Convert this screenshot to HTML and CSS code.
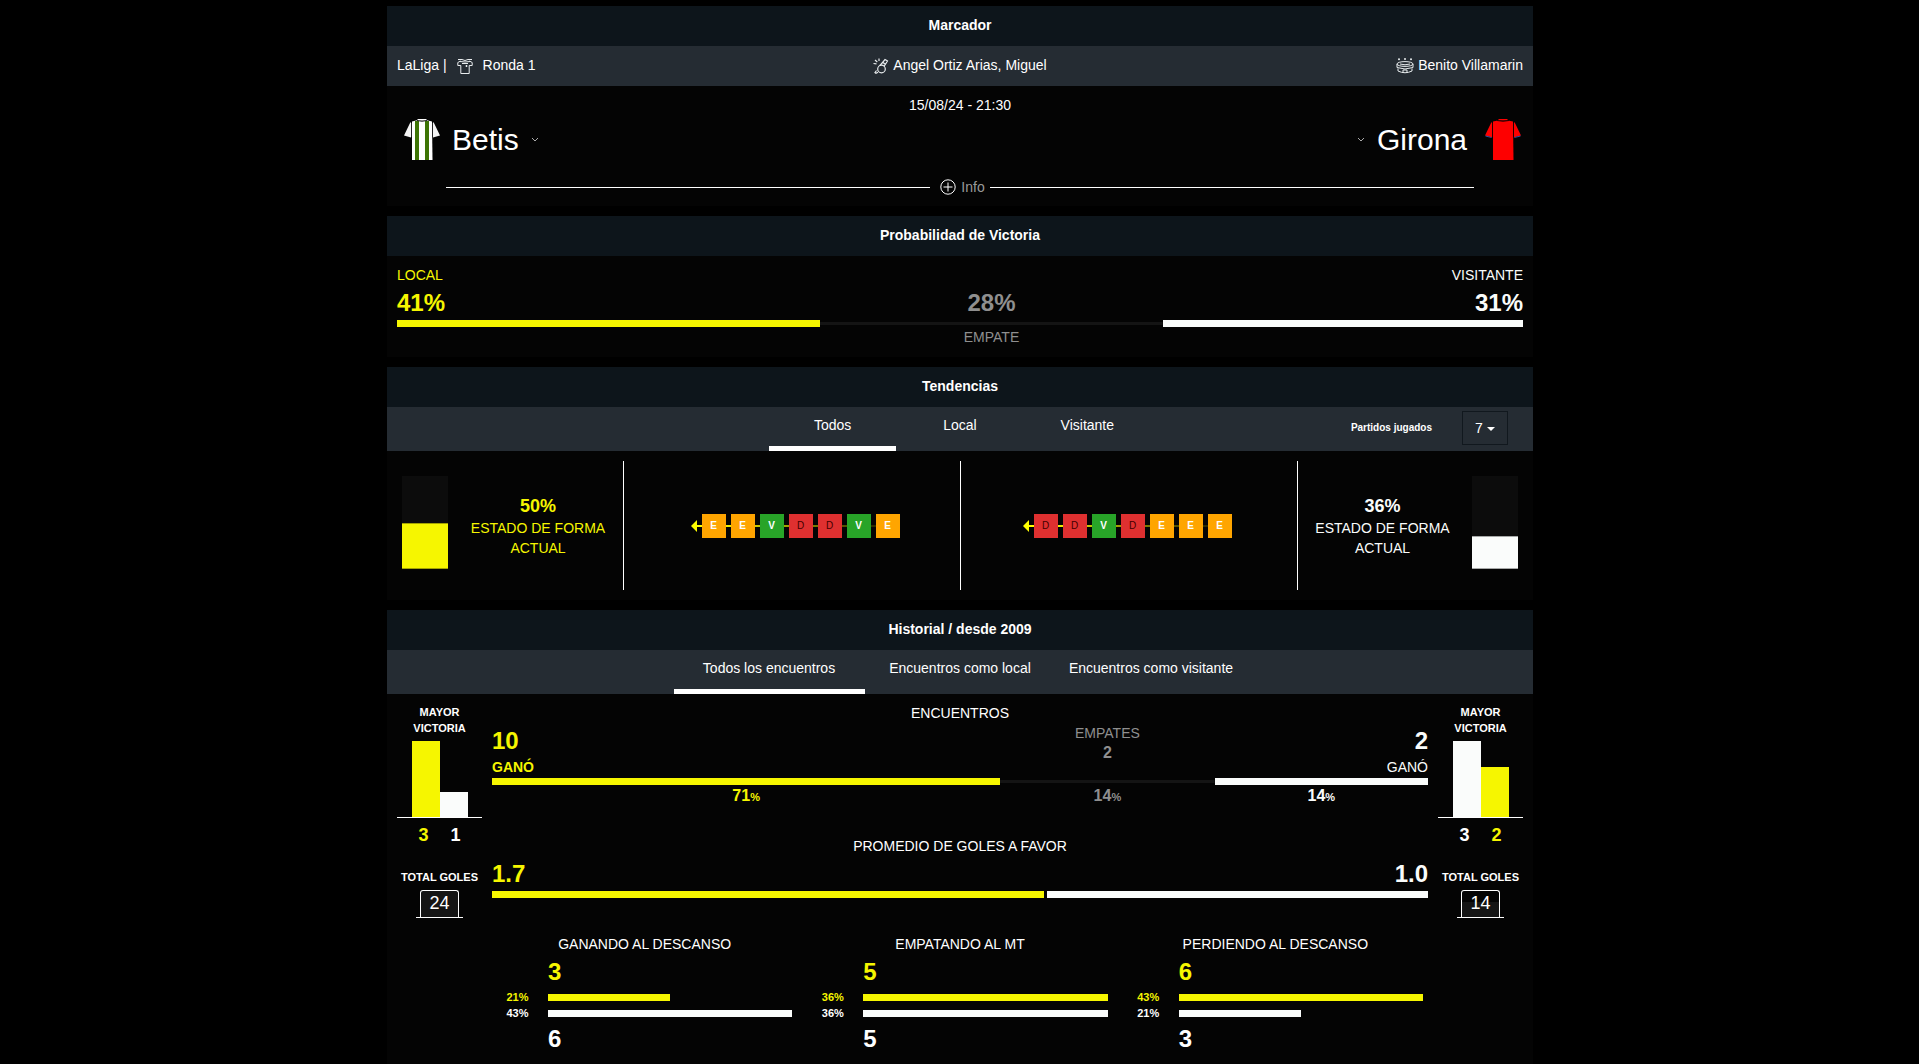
FILE: index.html
```html
<!DOCTYPE html>
<html lang="es">
<head>
<meta charset="utf-8">
<meta name="viewport" content="width=device-width, initial-scale=1">
<title>Betis - Girona</title>
<link rel="stylesheet" href="styles.css">
</head>
<body>
<main class="page">

<section class="panel">
  <h2 class="panel-title">Marcador</h2>
  <div class="match-meta">
    <div class="meta-item meta-league"><span>LaLiga |</span>
      <svg class="meta-icon" width="16" height="16" viewBox="0 0 16 16" aria-hidden="true"><g fill="none" stroke="#e8ecee"><path d="M1 1.500h4l3 1 3-1h4M3 3.500l5 .5 5-.5M3.500 3L.8 4.500v3h3v8h8.400v-8h3v-3L12.500 3"/><path d="M5 5.500h6M8.500 8h2M9.500 7v2"/></g></svg>
      <span>Ronda 1</span></div>
    <div class="meta-item meta-center">
      <svg class="meta-icon" width="16" height="16" viewBox="0 0 16 16" aria-hidden="true"><g fill="none" stroke="#e8ecee" stroke-width="1.200"><circle cx="8.500" cy="11" r="3.800"/><path d="M7 7.500L12 1.500l2.500 1.500-3.500 5.500M10 4.500l2.300 1.800M.5 5.500l3 .3M6 .5v2.500M2 2l2.300 2M3.500 12.500l-1.500 2 1 .7 2-1"/></g></svg>
      <span>Angel Ortiz Arias, Miguel</span></div>
    <div class="meta-item meta-right">
      <svg class="meta-icon" width="18" height="16" viewBox="0 0 18 16" aria-hidden="true"><g fill="none" stroke="#e8ecee"><ellipse cx="9" cy="6" rx="8" ry="2.400"/><path d="M4 6q5 1.600 10 0M1 6v3.500q8 3 16 0V6M2 10.500v2.500q7 3.500 14 0v-2.500M7 15v-3h4v3"/></g><g fill="#e8ecee"><circle cx="3" cy="1.300" r="1"/><circle cx="9" cy="1" r="1"/><circle cx="15" cy="1.300" r="1"/></g></svg>
      <span>Benito Villamarin</span></div>
  </div>
  <div class="score">
    <time class="score-date" datetime="2024-08-15T21:30">15/08/24 - 21:30</time>
    <div class="teams">
      <div class="team">
        <svg width="36" height="42" viewBox="0 0 36 42" aria-hidden="true"><path fill="#f4f4f4" d="M6.500 3L0 16.500l7 2L8 6zM29.500 3L36 16.500l-7 2L28 6z"/><path fill="#fff" d="M8 2.500L13 1.200h10l5 1.300.5 38.500H8z"/><path fill="#3d7405" d="M11 2h4v39h-4zM21 2h4v39h-4z"/><path fill="none" stroke="#222" d="M7.500 4v14M28.500 4v14M13 1.500q5 1.500 10 0"/><path stroke="#fff" d="M13.500.5h9"/></svg>
        <h1 class="team-name">Betis</h1>
        <svg width="8" height="6" viewBox="0 0 8 6" aria-hidden="true"><path fill="none" stroke="#aaa" d="M1 1l3 3 3-3"/></svg>
      </div>
      <div class="team">
        <svg width="8" height="6" viewBox="0 0 8 6" aria-hidden="true"><path fill="none" stroke="#aaa" d="M1 1l3 3 3-3"/></svg>
        <h1 class="team-name">Girona</h1>
        <svg class="kit-away" width="36" height="42" viewBox="0 0 36 42" aria-hidden="true"><path fill="#fe0000" d="M6.500 3L0 16.500l7 2L8 6zM29.500 3L36 16.500l-7 2L28 6z"/><path stroke="#2c4fa0" d="M.5 17l6 1.500M35.500 17l-6 1.500"/><path fill="#fe0000" d="M8 2.500L13 1.500h10l5 1L28.500 41H8z"/><path fill="none" stroke="#200" d="M7.500 4v14M28.500 4v14M12 1.500q6 1.500 12 0"/><path stroke="#fe0000" d="M13.500.5h9"/></svg>
      </div>
    </div>
    <div class="info-row">
      <button class="info-btn" type="button">
        <svg width="16" height="16" viewBox="0 0 16 16" aria-hidden="true"><g fill="none" stroke="#fff"><circle cx="8" cy="8" r="7.200"/><path d="M3.500 8h9M8 3.500v9"/></g></svg>
        Info</button>
    </div>
  </div>
</section>

<section class="panel">
  <h2 class="panel-title">Probabilidad de Victoria</h2>
  <div class="odds">
    <div class="odds-col home" style="width:37.6%"><span class="label">LOCAL</span><strong class="big">41%</strong><i class="bar"></i></div>
    <div class="odds-col draw" style="width:30.4%"><strong class="big">28%</strong><i class="bar bar-draw"></i><span class="label">EMPATE</span></div>
    <div class="odds-col away" style="width:32%"><span class="label">VISITANTE</span><strong class="big">31%</strong><i class="bar"></i></div>
  </div>
</section>

<section class="panel">
  <h2 class="panel-title">Tendencias</h2>
  <div class="tabbar">
    <nav class="tabs tabs-third">
      <button class="tab active" type="button">Todos</button>
      <button class="tab" type="button">Local</button>
      <button class="tab" type="button">Visitante</button>
    </nav>
    <div class="played">
      <label for="played">Partidos jugados</label>
      <span class="select"><select id="played"><option>5</option><option>6</option><option selected>7</option></select></span>
    </div>
  </div>
  <div class="trends">
    <div class="form-state home">
      <div class="gauge"><i class="gauge-fill" style="height:50%"></i></div>
      <p class="form-text"><strong>50%</strong>ESTADO DE FORMA ACTUAL</p>
    </div>
    <div class="streak streak-home"><ol class="streak-list">
      <li class="tie">E</li><li class="tie">E</li><li class="win">V</li><li class="loss">D</li><li class="loss">D</li><li class="win">V</li><li class="tie">E</li>
    </ol></div>
    <div class="streak streak-away"><ol class="streak-list">
      <li class="loss">D</li><li class="loss">D</li><li class="win">V</li><li class="loss">D</li><li class="tie">E</li><li class="tie">E</li><li class="tie">E</li>
    </ol></div>
    <div class="form-state away">
      <p class="form-text"><strong>36%</strong>ESTADO DE FORMA ACTUAL</p>
      <div class="gauge"><i class="gauge-fill" style="height:36%"></i></div>
    </div>
  </div>
</section>

<section class="panel panel-last">
  <h2 class="panel-title">Historial / desde 2009</h2>
  <div class="tabbar">
    <nav class="tabs tabs-half">
      <button class="tab active" type="button">Todos los encuentros</button>
      <button class="tab" type="button">Encuentros como local</button>
      <button class="tab" type="button">Encuentros como visitante</button>
    </nav>
  </div>
  <div class="history">
    <aside class="side">
      <h3 class="side-title">MAYOR VICTORIA</h3>
      <div class="columns"><i class="col-home" style="height:100%"></i><i class="col-away" style="height:33%"></i></div>
      <div class="columns-values"><b class="home">3</b><b>1</b></div>
      <h3 class="side-title">TOTAL GOLES</h3>
      <div class="goal"><span class="goal-box" style="--fill:100%">24</span></div>
    </aside>

    <div class="history-main">
      <h3 class="stat-title">ENCUENTROS</h3>
      <div class="split">
        <div class="split-col home" style="width:54.3%"><div class="split-head"><strong class="big">10</strong><b>GANÓ</b></div><i class="bar"></i><span class="pct">71<small>%</small></span></div>
        <div class="split-col draw" style="width:22.9%"><div class="split-head"><span>EMPATES</span><b class="mid">2</b></div><i class="bar bar-draw"></i><span class="pct">14<small>%</small></span></div>
        <div class="split-col away" style="width:22.8%"><div class="split-head"><strong class="big">2</strong><span>GANÓ</span></div><i class="bar"></i><span class="pct">14<small>%</small></span></div>
      </div>
      <h3 class="stat-title">PROMEDIO DE GOLES A FAVOR</h3>
      <div class="split split-goals">
        <div class="split-col home" style="width:59%"><strong class="big">1.7</strong><i class="bar"></i></div>
        <div class="split-col away" style="width:40.7%"><strong class="big">1.0</strong><i class="bar"></i></div>
      </div>
      <div class="halves">
        <div class="half">
          <h3 class="stat-title">GANANDO AL DESCANSO</h3>
          <strong class="big home">3</strong>
          <span class="half-pct home">21%</span><i class="bar home" style="width:50%"></i>
          <span class="half-pct">43%</span><i class="bar" style="width:100%"></i>
          <strong class="big">6</strong>
        </div>
        <div class="half">
          <h3 class="stat-title">EMPATANDO AL MT</h3>
          <strong class="big home">5</strong>
          <span class="half-pct home">36%</span><i class="bar home" style="width:100%"></i>
          <span class="half-pct">36%</span><i class="bar" style="width:100%"></i>
          <strong class="big">5</strong>
        </div>
        <div class="half">
          <h3 class="stat-title">PERDIENDO AL DESCANSO</h3>
          <strong class="big home">6</strong>
          <span class="half-pct home">43%</span><i class="bar home" style="width:100%"></i>
          <span class="half-pct">21%</span><i class="bar" style="width:50%"></i>
          <strong class="big">3</strong>
        </div>
      </div>
    </div>

    <aside class="side">
      <h3 class="side-title">MAYOR VICTORIA</h3>
      <div class="columns"><i class="col-away" style="height:100%"></i><i class="col-home" style="height:66%"></i></div>
      <div class="columns-values"><b>3</b><b class="home">2</b></div>
      <h3 class="side-title">TOTAL GOLES</h3>
      <div class="goal"><span class="goal-box" style="--fill:58%">14</span></div>
    </aside>
  </div>
</section>

</main>
</body>
</html>
```

FILE: styles.css
```css
:root {
  --home: #f6f600;
  --away: #fafcfb;
  --muted: #8f8f8f;
  --title-bg: #0d151b;
  --bar-bg: #252c33;
}

* { box-sizing: border-box; }

body {
  margin: 0;
  padding-left: 1px;
  background: #000;
  color: #fff;
  font: 14px/20px "Liberation Sans", Arial, sans-serif;
}

h1, h2, h3, p, ol { margin: 0; padding: 0; font-size: inherit; font-weight: normal; }
button, select { font: inherit; color: inherit; background: none; border: 0; padding: 0; }
i { display: block; }

.page {
  max-width: 1146px;
  min-height: 100vh;
  margin: 0 auto;
  padding-top: 6px;
  display: flex;
  flex-direction: column;
  gap: 10px;
}

.panel { background: #040404; }
.panel-last { flex: 1; }

.panel-title {
  padding: 9px 10px 11px;
  background: var(--title-bg);
  font-weight: bold;
  text-align: center;
}

.home { color: var(--home); }
.away { color: var(--away); }
.draw { color: var(--muted); }

.bar { height: 7px; background: var(--away); }
.home .bar, .bar.home { background: var(--home); }
.bar-draw {
  background: linear-gradient(#141414, #141414) center / 100% 3px no-repeat;
}
.big { font-size: 24px; line-height: 30px; }

/* Marcador */
.match-meta {
  display: grid;
  grid-template-columns: 1fr 1fr 1fr;
  padding: 9px 10px 11px;
  background: var(--bar-bg);
}
.meta-item { display: flex; gap: 4px; }
.meta-icon { margin-top: 3px; }
.meta-league { gap: 10px; }
.meta-center { justify-content: center; }
.meta-right { justify-content: flex-end; }

.score { padding: 9px 10px; }
.score-date { display: block; text-align: center; }
.teams { display: flex; justify-content: space-between; padding: 4px 2px 0 7px; }
.team { display: flex; align-items: center; gap: 12px; }
.team-name { font-size: 30px; line-height: 40px; }
.kit-away { margin-left: 6px; }

.info-row { display: flex; align-items: center; gap: 5px; margin: 16px 49px 0; }
.info-row::before, .info-row::after { content: ""; flex: 1; height: 1px; background: #fff; }
.info-btn { display: flex; align-items: center; gap: 5px; padding-left: 5px; color: #999; }

/* Probabilidad */
.odds { display: flex; padding: 9px 10px 10px; }
.odds-col { display: flex; flex-direction: column; }
.odds-col .big { margin: 3px 0 2px; }
.odds-col.away { text-align: right; }
.odds-col.draw { padding-top: 20px; text-align: center; }

/* Tab bars */
.tabbar {
  display: grid;
  grid-template-columns: 1fr;
  align-items: start;
  height: 44px;
  background: var(--bar-bg);
}
.tabbar > * { grid-area: 1 / 1; }
.tabs { display: grid; grid-template-columns: 1fr 1fr 1fr; justify-self: center; height: 100%; }
.tabs-third { width: 33.333%; }
.tabs-half { width: 50%; }
.tab { padding: 0 0 4px; border-bottom: 5px solid transparent; cursor: pointer; white-space: nowrap; }
.tab.active { border-color: #fff; }

.played {
  justify-self: end;
  display: flex;
  align-items: center;
  gap: 30px;
  padding: 4px 25px 0 0;
  font-size: 10px;
  font-weight: bold;
}
.select { position: relative; }
.select select {
  width: 46px;
  height: 34px;
  padding: 0 12px;
  border: 1px solid #11181e;
  font-size: 14px;
  font-weight: normal;
  appearance: none;
  display: block;
}
.select::after {
  content: "";
  position: absolute;
  right: 13px;
  top: 16px;
  border: 4px solid transparent;
  border-top-color: #fff;
  border-bottom: 0;
  pointer-events: none;
}

/* Tendencias */
.trends {
  display: grid;
  grid-template-columns: 227fr 337fr 337fr 225fr;
  padding: 10px;
  min-height: 149px;
}
.trends > * { display: flex; align-items: center; }
.trends > :not(:last-child) { border-right: 1px solid #fff; }
.form-state { gap: 10px; padding: 0 5px; }
.form-text { flex: 1; padding: 0 10px; text-align: center; }
.form-text strong { display: block; font-size: 18px; line-height: 24px; }
.gauge {
  width: 46px;
  height: 93px;
  margin-bottom: 6px;
  display: flex;
  flex-direction: column;
  justify-content: flex-end;
  background: #0c0c0c;
}
.gauge-fill { background: currentColor; box-shadow: inset 0 1px #0005, inset 0 -1px #0005; }
.streak { justify-content: center; }
.streak-home { padding-left: 6px; }
.streak-away { padding-right: 4px; }
.streak-list {
  position: relative;
  display: flex;
  gap: 5px;
  padding-left: 11px;
  list-style: none;
  font-size: 10px;
  line-height: 24px;
  text-align: center;
  background: linear-gradient(90deg, #ff0, #ff0 10%, #000) 5px 11px / 100% 2px no-repeat;
}
.streak-list::before {
  content: "";
  position: absolute;
  left: 0;
  top: 6px;
  border: 6px solid transparent;
  border-left: 0;
  border-right: 6px solid #ff0;
}
.streak-list li { width: 24px; height: 24px; }
.tie { background: #ffa500; font-weight: bold; }
.win { background: #28a428; font-weight: bold; }
.loss { background: #df3030; color: #400; }

/* Historial */
.history {
  display: grid;
  grid-template-columns: 85px 1fr 85px;
  gap: 10px;
  padding: 9px 10px 10px;
}
.side { padding-top: 1px; text-align: center; }
.side-title { font-size: 11px; font-weight: bold; line-height: 16px; }
.columns {
  display: flex;
  align-items: flex-end;
  justify-content: center;
  height: 77px;
  margin-top: 5px;
  border-bottom: 1px solid #fff;
}
.columns i { width: 28px; }
.col-home { background: var(--home); }
.col-away { background: var(--away); }
.columns-values {
  display: flex;
  justify-content: center;
  gap: 22px;
  margin: 7px 0 24px;
  font-size: 18px;
  line-height: 20px;
}
.goal {
  width: 47px;
  margin: 5px auto 0;
  padding: 0 4px;
  border-bottom: 1px solid #fff;
}
.goal-box {
  display: block;
  height: 27px;
  border: 1px solid #fff;
  border-bottom: 0;
  border-radius: 3px 3px 0 0;
  background: linear-gradient(#151515, #151515) bottom / 100% var(--fill) no-repeat;
  font-size: 18px;
  line-height: 24px;
}
.side-title:first-child { padding: 0 10px; }

.stat-title { text-align: center; }
.split { display: flex; margin-bottom: 29px; }
.split-col { display: flex; flex-direction: column; }
.split-head {
  display: flex;
  flex-direction: column;
  height: 55px;
}
.split-head .big { margin: 3px 0 1px; }
.mid { font-size: 16px; }
.draw .split-head { text-align: center; }
.away .split-head, .away > .big { text-align: right; }
.pct { margin-top: 1px; font-size: 16px; font-weight: bold; text-align: center; }
.pct small { font-size: 11px; }

.split-goals { justify-content: space-between; margin-bottom: 36px; }
.split-goals .big { margin: 3px 0 2px; }

.halves { display: grid; grid-template-columns: 1fr 1fr 1fr; margin: 0 -5px; }
.half {
  display: grid;
  grid-template-columns: 41px 1fr;
  column-gap: 10px;
  align-items: center;
  padding: 0 10px;
}
.half .stat-title { grid-column: 1 / 3; }
.half .big { grid-column: 2; margin: 3px 0 2px; }
.half-pct { font-size: 11px; font-weight: bold; line-height: 16px; text-align: center; }
```
